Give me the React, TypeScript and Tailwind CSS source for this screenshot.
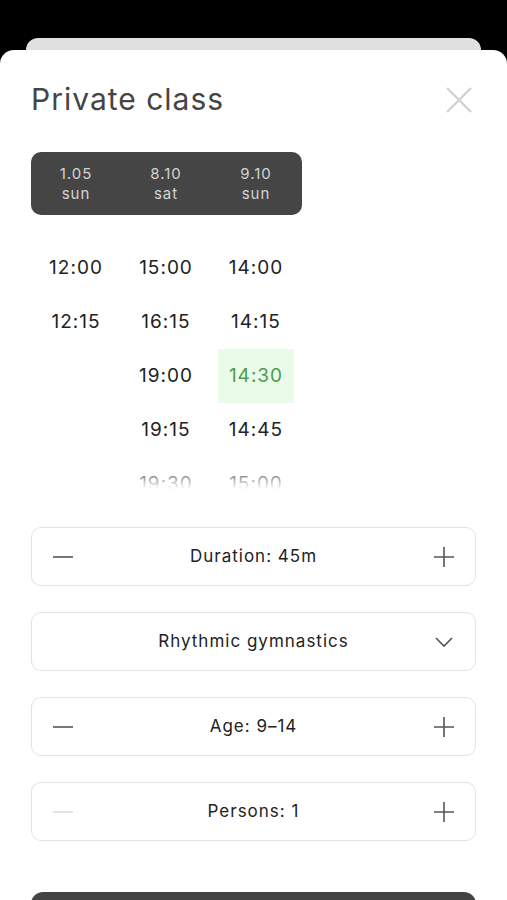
import { useState } from "react";

const DATES = [
  { date: "1.05", day: "sun", times: ["12:00", "12:15"] },
  { date: "8.10", day: "sat", times: ["15:00", "16:15", "19:00", "19:15", "19:30"] },
  { date: "9.10", day: "sun", times: ["14:00", "14:15", "14:30", "14:45", "15:00"] },
];

function Minus({ light }: { light?: boolean }) {
  return (
    <svg width="22" height="22" viewBox="0 0 22 22" fill="none">
      <path d="M1 11h20" stroke={light ? "#dedede" : "#555"} strokeWidth="1.6" />
    </svg>
  );
}

function Plus() {
  return (
    <svg width="22" height="22" viewBox="0 0 22 22" fill="none">
      <path d="M1 11h20M11 1v20" stroke="#555" strokeWidth="1.6" />
    </svg>
  );
}

function Stepper({ label, minusLight }: { label: string; minusLight?: boolean }) {
  return (
    <div className="flex h-[59px] items-center justify-between rounded-[10px] border border-[#e2e2e2] px-[20px]">
      <button className="flex w-[22px] items-center justify-center">
        <Minus light={minusLight} />
      </button>
      <span className="text-[17px] text-[#222]">{label}</span>
      <button className="flex w-[22px] items-center justify-center">
        <Plus />
      </button>
    </div>
  );
}

export default function App() {
  const [selected] = useState("9.10-14:30");

  return (
    <div className="h-[900px] overflow-hidden bg-black pt-[38px] font-['Inter',sans-serif] tracking-[1px]">
      <div className="mx-[26px] h-[30px] rounded-t-[12px] bg-[#e0e0e0]" />
      <div className="relative -mt-[18px] h-[900px] rounded-t-[14px] bg-white px-[31px] pt-[31px]">
        <div className="flex items-center justify-between">
          <h1 className="text-[30px] leading-[36px] text-[#454545]">Private class</h1>
          <svg width="28" height="28" viewBox="0 0 28 28" fill="none" className="mr-[3px] mt-[1px]">
            <path d="M2 2l24 24M26 2L2 26" stroke="#d2d2d2" strokeWidth="2.4" />
          </svg>
        </div>

        <div className="mt-[35px] flex h-[63px] w-[271px] items-center rounded-[10px] bg-[#454545]">
          {DATES.map((d) => (
            <div key={d.date} className="flex w-[90px] flex-col items-center text-[15px] leading-[20px] text-[#d4d4d4]">
              <span>{d.date}</span>
              <span>{d.day}</span>
            </div>
          ))}
        </div>

        <div className="relative mt-[26px] h-[248px] overflow-hidden">
          <div className="flex">
            {DATES.map((d) => (
              <div key={d.date} className="flex w-[90px] flex-col items-center">
                {d.times.map((t) => {
                  const active = `${d.date}-${t}` === selected;
                  return (
                    <div
                      key={t}
                      className={
                        "flex h-[54px] w-[76px] items-center justify-center text-[19px] " +
                        (active ? "bg-[#ebfbea] text-[#4b9e4b]" : "text-[#222]")
                      }
                    >
                      {t}
                    </div>
                  );
                })}
              </div>
            ))}
          </div>
          <div className="pointer-events-none absolute inset-x-0 bottom-0 h-[26px] bg-gradient-to-t from-white to-white/0" />
        </div>

        <div className="mt-[38px] flex flex-col gap-[26px]">
          <Stepper label="Duration: 45m" />
          <div className="flex h-[59px] items-center justify-between rounded-[10px] border border-[#e2e2e2] px-[20px]">
            <span className="w-[22px]" />
            <span className="text-[17px] text-[#222]">Rhythmic gymnastics</span>
            <svg width="22" height="22" viewBox="0 0 22 22" fill="none">
              <path d="M3 7l8 8 8-8" stroke="#555" strokeWidth="1.6" />
            </svg>
          </div>
          <Stepper label="Age: 9–14" />
          <Stepper label="Persons: 1" minusLight />
        </div>

        <button className="mt-[51px] h-[60px] w-full rounded-[12px] bg-[#444]" />
      </div>
    </div>
  );
}
